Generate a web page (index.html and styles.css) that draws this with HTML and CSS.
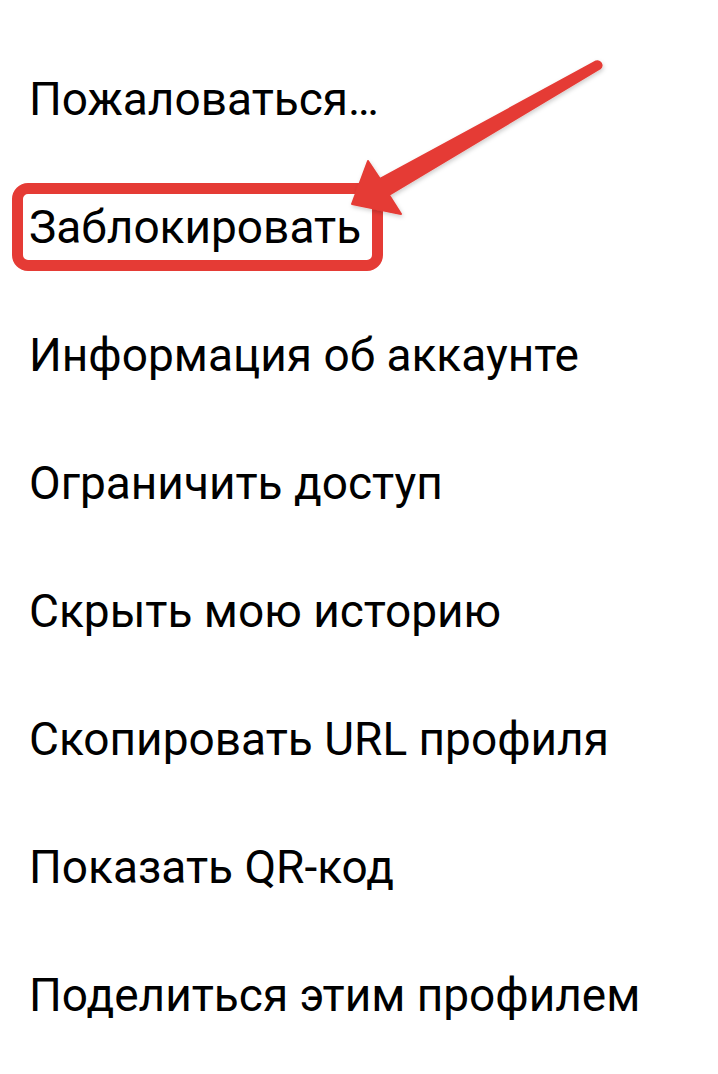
FILE: index.html
```html
<!DOCTYPE html>
<html lang="ru">
<head>
  <meta charset="UTF-8">
  <meta name="viewport" content="width=device-width, initial-scale=1.0">
  <title>Меню профиля</title>
  <link rel="stylesheet" href="styles.css">
</head>
<body>
  <div class="page">
    <ul class="menu">
      <li class="menu-item">Пожаловаться…</li>
      <li class="menu-item"><span class="highlight">Заблокировать</span></li>
      <li class="menu-item">Информация об аккаунте</li>
      <li class="menu-item">Ограничить доступ</li>
      <li class="menu-item">Скрыть мою историю</li>
      <li class="menu-item">Скопировать URL профиля</li>
      <li class="menu-item">Показать QR-код</li>
      <li class="menu-item">Поделиться этим профилем</li>
    </ul>

    <!-- pointer arrow drawn on top of the list -->
    <svg class="pointer" viewBox="0 0 718 1074" width="718" height="1074">
      <defs>
        <filter id="soft" x="-10%" y="-10%" width="130%" height="130%">
          <feDropShadow dx="1" dy="2" stdDeviation="2" flood-color="#000" flood-opacity="0.2"/>
        </filter>
      </defs>
      <path d="M352 204 L368 161 L380 179 L596 61.5 A4.1 4.1 0 0 1 600 68.5 L389 195 L401 214 Z"
            fill="#e53b35" stroke="#e53b35" stroke-width="2" stroke-linejoin="round" filter="url(#soft)"/>
    </svg>
  </div>
</body>
</html>
```

FILE: styles.css
```css
body {
  margin: 0;
  padding: 0;
  background-color: #fff;
  font-family: Roboto, 'Noto Sans', Arial, sans-serif;
  color: #000;
}
.page {
  position: relative;
  width: 718px;
  height: 1074px;
  overflow: hidden;
}
.menu {
  list-style: none;
  margin: 0;
  padding: 35px 0 0 29px;
}
.menu-item {
  font-size: 46px;
  line-height: 128px;
  white-space: nowrap;
}
.highlight {
  display: inline-block;
  line-height: normal;
  margin-left: -17px;
  padding: 6px 11px 6px 6px;
  border: 11px solid #e53b35;
  border-radius: 16px;
}
.pointer {
  position: absolute;
  top: 0;
  left: 0;
  pointer-events: none;
}
```
